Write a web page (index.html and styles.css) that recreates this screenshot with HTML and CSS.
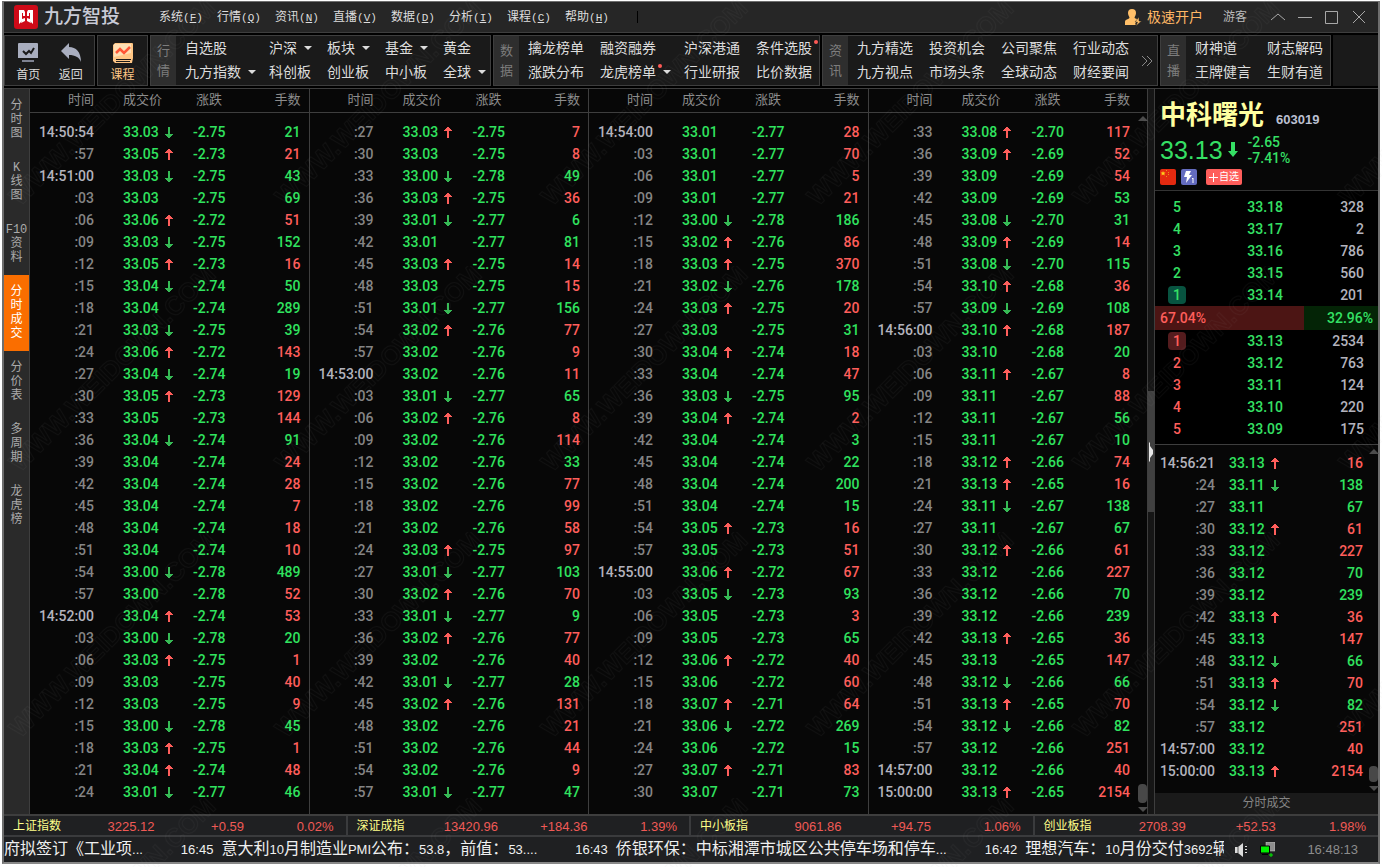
FILE: index.html
```html
<!DOCTYPE html>
<html lang="zh-CN">
<head>
<meta charset="utf-8">
<title>九方智投</title>
<link rel="stylesheet" href="styles.css">
</head>
<body>
<svg class="defs" aria-hidden="true">
  <symbol id="up" viewBox="0 0 8 11"><path d="M3 0h2v1h1v1h1v1h1v1H5v7H3V4H0V3h1V2h1V1h1z"/></symbol>
  <symbol id="down" viewBox="0 0 8 11"><path d="M3 11h2v-1h1V9h1V8h1V7H5V0H3v7H0v1h1v1h1v1h1z"/></symbol>
</svg>
<div class="window">
  <header class="titlebar">
    <svg class="logo" viewBox="0 0 24 24"><rect width="24" height="24" rx="3" fill="#cf0a18"/><path fill="#fff" d="M5 5h5l1 2v4H9V8H8v8l-3 3z"/><path fill="#fff" d="M19 5h-5l-1 2v4h2V8h1v8l3 3z"/><path fill="#fff" d="M8 14l3-1v3l-4 2zM16 14l-3-1v3l4 2z"/></svg>
    <h1 class="brand">九方智投</h1>
    <nav class="menus">
      <button>系统<span class="key">(<u>F</u>)</span></button>
      <button>行情<span class="key">(<u>Q</u>)</span></button>
      <button>资讯<span class="key">(<u>N</u>)</span></button>
      <button>直播<span class="key">(<u>V</u>)</span></button>
      <button>数据<span class="key">(<u>D</u>)</span></button>
      <button>分析<span class="key">(<u>I</u>)</span></button>
      <button>课程<span class="key">(<u>C</u>)</span></button>
      <button>帮助<span class="key">(<u>H</u>)</span></button>
    </nav>
    <span class="menu-end"></span>
    <a class="open-account" href="#"><svg viewBox="0 0 17 17" width="17" height="17" fill="#ffbf69"><path d="M7 0a4 4 0 0 1 4 4c0 2-1 3-1.500 4.500 0 1 3 1.500 3.500 2L10 15l1 1H0v-3c0-3 4-2.500 4.500-4.500C4 7 3 6 3 4a4 4 0 0 1 4-4z"/><path d="M14 8l-4 5h2.500L11 17l5.500-5H14z" stroke="#262626" stroke-width=".5"/></svg>极速开户</a>
    <a class="guest" href="#">游客</a>
    <div class="win-buttons">
      <button aria-label="收起"><svg viewBox="0 0 14 14"><path d="M0 10L7 4l7 6"/></svg></button>
      <button aria-label="最小化"><svg viewBox="0 0 14 14"><path d="M0 7.500h14"/></svg></button>
      <button aria-label="最大化"><svg viewBox="0 0 14 14"><path d="M.5 1.500h12v12H.5z"/></svg></button>
      <button aria-label="关闭"><svg viewBox="0 0 14 14"><path d="M1 1l12 12M13 1L1 13"/></svg></button>
    </div>
  </header>

  <nav class="toolbar">
    <div class="group icons">
      <button class="tool"><svg viewBox="0 0 20 20"><path fill="#a9aebf" d="M1 0h18a1 1 0 0 1 1 1v14H0V1a1 1 0 0 1 1-1z"/><path fill="#7e8291" d="M4 17h12v2H4z"/><path d="M5 8l3 3 3-3 2 2 3-5" fill="none" stroke="#1a1a1a" stroke-width="2"/></svg>首页</button>
      <button class="tool"><svg viewBox="0 0 20 20"><path fill="#a9aebf" d="M8 0v4c7 0 12 5 12 15-2-5-6-7-12-7v4L0 8z"/></svg>返回</button>
    </div>
    <div class="group icons single">
      <button class="tool course"><svg viewBox="0 0 20 20"><path fill="#ffc685" d="M2 0h17a1 1 0 0 1 1 1v14l-1 5H2l-2-2V2z"/><path fill="#ffdfb4" d="M1 1h17v9L1 14z"/><path d="M3 16.500h15M3 18.500h14" fill="none" stroke="#1a1a1a"/><path d="M3 10l4-4 4 4 6-6" fill="none" stroke="#ff5636" stroke-width="2.500"/></svg>课程</button>
    </div>
    <div class="group">
      <span class="label">行<br>情</span>
      <div class="links market">
        <a href="#">自选股</a><a class="drop" href="#">沪深</a><a class="drop" href="#">板块</a><a class="drop" href="#">基金</a><a href="#">黄金</a>
        <a class="drop" href="#">九方指数</a><a href="#">科创板</a><a href="#">创业板</a><a href="#">中小板</a><a class="drop" href="#">全球</a>
      </div>
    </div>
    <div class="group">
      <span class="label">数<br>据</span>
      <div class="links data">
        <a href="#">擒龙榜单</a><a href="#">融资融券</a><a href="#">沪深港通</a><a class="hot" href="#">条件选股</a>
        <a href="#">涨跌分布</a><a class="hot drop" href="#">龙虎榜单</a><a href="#">行业研报</a><a href="#">比价数据</a>
      </div>
    </div>
    <div class="group">
      <span class="label">资<br>讯</span>
      <div class="links info">
        <a href="#">九方精选</a><a href="#">投资机会</a><a href="#">公司聚焦</a><a href="#">行业动态</a>
        <a href="#">九方视点</a><a href="#">市场头条</a><a href="#">全球动态</a><a href="#">财经要闻</a>
      </div>
      <button class="more" aria-label="更多"><svg viewBox="0 0 12 12"><path d="M1 1l5 5-5 5M6 1l5 5-5 5"/></svg></button>
    </div>
    <div class="group">
      <span class="label">直<br>播</span>
      <div class="links live">
        <a href="#">财神道</a><a href="#">财志解码</a>
        <a href="#">王牌健言</a><a href="#">生财有道</a>
      </div>
    </div>
    <div class="group rest"></div>
  </nav>

  <main class="main">
    <nav class="tabs">
      <button>分<br>时<br>图</button>
      <button>K<br>线<br>图</button>
      <button>F10<br>资<br>料</button>
      <button class="active">分<br>时<br>成<br>交</button>
      <button>分<br>价<br>表</button>
      <button>多<br>周<br>期</button>
      <button>龙<br>虎<br>榜</button>
    </nav>
    <section class="ticks" id="ticks"></section>
    <div class="splitter"><span class="track-a"></span><span class="thumb"><svg viewBox="0 0 4 20"><path fill="#e8e8e8" d="M0 0l1 1v3l3 4v4l-3 4v3l-1 1z"/></svg></span><span class="track-b"></span></div>
    <aside class="quote">
      <div class="summary">
        <div class="name-row"><h2>中科曙光</h2><span class="code">603019</span></div>
        <div class="price-row"><span class="last">33.13</span><svg class="big-down" viewBox="0 0 10 15"><path d="M3 0h4v9h3l-5 6-5-6h3z"/></svg><span class="delta">-2.65<br>-7.41%</span></div>
        <div class="badges">
          <svg viewBox="0 0 16 16"><rect width="16" height="16" rx="2" fill="#e42a10"/><path fill="#ffd21c" d="M3 2l.7 1.600H5.500L4.200 4.700l.6 1.800L3 5.500 1.400 6.500l.5-1.800L.6 3.600h1.800z"/><path fill="#e8901c" d="M6 1h1v1H6zM8 3h1v1H8zM8 5h1v1H8zM6 7h1v1H6z"/></svg>
          <svg viewBox="0 0 16 16"><rect width="16" height="16" rx="2" fill="#646cc0"/><path fill="#fff" d="M5 2h5L8 6h3l-6 8 1-6H3z"/><path d="M11 10l1-1v5" fill="none" stroke="#fff"/></svg>
          <button class="add"><svg viewBox="0 0 9 9"><path d="M0 4.500h9M4.500 0v9"/></svg>自选</button>
        </div>
      </div>
      <table class="book sell"><tbody id="asks"></tbody></table>
      <div class="ratio"><span class="ratio-buy" style="width:67.04%">67.04%</span><span class="ratio-sell">32.96%</span></div>
      <table class="book buy"><tbody id="bids"></tbody></table>
      <div class="recent">
        <table class="recent-table"><tbody id="recent"></tbody></table>
        <div class="scroll"><span class="arrow-up"></span><span class="bar"></span><span class="arrow-down"></span></div>
      </div>
      <div class="foot">分时成交</div>
    </aside>
  </main>

  <section class="indices">
    <div class="index"><b>上证指数</b><span>3225.12</span><span>+0.59</span><span>0.02%</span></div>
    <div class="index"><b>深证成指</b><span>13420.96</span><span>+184.36</span><span>1.39%</span></div>
    <div class="index"><b>中小板指</b><span>9061.86</span><span>+94.75</span><span>1.06%</span></div>
    <div class="index"><b>创业板指</b><span>2708.39</span><span>+52.53</span><span>1.98%</span></div>
  </section>

  <footer class="status">
    <div class="news">
      <p>府拟签订《工业项<span>...</span></p>
      <p><time>16:45</time>意大利<span>10</span>月制造业<span>PMI</span>公布：<span>53.8</span>，前值：<span>53....</span></p>
      <p><time>16:43</time>侨银环保：中标湘潭市城区公共停车场和停车<span>...</span></p>
      <p><time>16:42</time>理想汽车：<span>10</span>月份交付<span>3692</span>辆</p>
    </div>
    <svg class="speaker" viewBox="0 0 14 14"><path fill="#ddd" d="M1 4h3l5-4v14l-5-4H1z"/><path d="M4 4v6" stroke="#555"/><path fill="#ddd" d="M11 3h2v1h-2zM11 6h2v1h-2zM11 9h2v1h-2z"/></svg>
    <svg class="net" viewBox="0 0 15 15"><path fill="#8d8d8d" stroke="#ccc" stroke-width=".5" d="M6 0h9v9H6z"/><path fill="#00f000" stroke="#000" stroke-width="1" d="M.5 4h9v7h-9z"/><path fill="#000" d="M2 12h6v1H2z"/><path d="M9 13h4M11 11v4" stroke="#00f000"/></svg>
    <time class="clock">16:48:13</time>
  </footer>
</div>
<svg class="watermark" aria-hidden="true">
  <defs><pattern id="wm" width="266" height="266" patternUnits="userSpaceOnUse"><text transform="translate(20 207) rotate(-45)">WWW.WEIDOWN.COM</text></pattern></defs>
  <rect width="100%" height="100%" fill="url(#wm)"/>
</svg>
<script src="script.js"></script>
</body>
</html>
```
FILE: styles.css
```css
* { box-sizing: border-box; }
body {
  margin: 0;
  background: #fff;
  color: #ddd;
  font: 14px/22px "Liberation Sans", "Noto Sans CJK SC", sans-serif;
}
button { background: none; border: 0; padding: 0; margin: 0; color: inherit; font: inherit; }
a { color: inherit; text-decoration: none; }
h1, h2, p { margin: 0; font-weight: 400; }
table { border-collapse: collapse; border-spacing: 0; width: 100%; table-layout: fixed; }
td, th { padding: 0; font-weight: inherit; white-space: nowrap; }
.defs { position: absolute; width: 0; height: 0; }

.window {
  display: flex;
  flex-direction: column;
  min-height: calc(100vh - 4px);
  margin: 1px 2px 3px;
  border: 1px solid #6e6e6e;
  border-width: 1px 2px 2px;
  border-bottom-color: #888;
  background: #000;
}

/* title bar */
.titlebar {
  display: flex;
  align-items: center;
  height: 31px;
  padding: 0 12px 0 10px;
  background: #262626;
  border-bottom: 1px solid #3e3e3e;
  font-size: 12px;
}
.logo { width: 24px; height: 24px; }
.brand { margin-left: 6px; width: 115px; font-size: 19px; line-height: 30px; font-weight: 500; color: #c9cbd6; }
.menus { display: flex; gap: 16px; }
.menus button { width: 42px; white-space: nowrap; text-align: left; }
.key { font: 11px "Liberation Mono", monospace; }
.menu-end { width: 1px; height: 12px; margin-left: 30px; background: #000; }
.open-account { display: flex; align-items: center; gap: 5px; margin-left: auto; color: #ffb765; font-size: 14px; }
.guest { margin-left: 20px; color: #bbb; }
.win-buttons { display: flex; gap: 13px; margin-left: 24px; }
.win-buttons button { width: 14px; height: 14px; }
.win-buttons svg { display: block; fill: none; stroke: #a8a8a8; }

/* toolbar */
.toolbar { display: flex; gap: 2px; margin-top: 2px; }
.group { display: flex; height: 51px; background: #1a1a1a; border: 1px solid #3e3e3e; }
.rest { flex: 1; border: 0; }
.icons { width: 91px; padding: 0 2px; }
.single { width: 51px; padding: 0; }
.tool { flex: 1; display: flex; flex-direction: column; align-items: center; padding-top: 7px; font-size: 12px; line-height: 18px; }
.tool svg { width: 20px; height: 20px; margin-bottom: 3px; }
.course { color: #ffc685; }
.label { flex: none; width: 25px; padding-top: 5px; text-align: center; background: #2e2e2e; color: #7d7d7d; font-size: 13px; line-height: 20px; }
.links { display: grid; align-content: start; line-height: 24px; padding: 0 5px 0 9px; }
.links a { white-space: nowrap; justify-self: start; position: relative; }
.market { grid-template-columns: 84px 58px 58px 58px 42px; }
.data { grid-template-columns: 72px 84px 72px 58px; }
.info { grid-template-columns: 72px 72px 72px 64px; padding-right: 0; }
.live { grid-template-columns: 72px 58px; }
.drop::after { content: ""; display: inline-block; margin: 0 0 3px 7px; border: 4px solid transparent; border-top-color: #ddd; border-bottom: 0; }
.hot::before { content: ""; position: absolute; left: 58px; top: 4px; width: 4px; height: 4px; border-radius: 2px; background: #ff5a55; }
.more { width: 20px; display: flex; align-items: center; justify-content: center; }
.more svg { width: 12px; height: 12px; fill: none; stroke: #888; }

/* main */
.main { flex: 1; display: flex; margin-top: 2px; border-top: 1px solid #3e3e3e; border-bottom: 2px solid #3e3e3e; background: #070707; }
.tabs { flex: none; width: 26px; background: #2a2a2a; border-right: 1px solid #3e3e3e; }
.tabs button { display: block; width: 100%; padding: 10px 0; font-family: "Liberation Mono", "Noto Sans CJK SC", monospace; font-size: 12px; line-height: 14px; color: #aaa; }
.tabs .active { background: #fa6e00; color: #fff; }

.ticks { flex: 1; display: grid; grid-template-columns: repeat(4, 1fr); }
.panel { display: flex; border-right: 1px solid #3e3e3e; }
.panel-table { flex: 1; align-self: flex-start; }
.tick td { height: 22px; font: 500 14px/22px Roboto, sans-serif; }
.panel-table th { height: 23px; border-bottom: 1px solid #3e3e3e; color: #8c8c8c; font-size: 13px; line-height: 20px; text-align: left; }
.panel-table tbody::before { content: ""; display: block; height: 8px; }
.c-time { width: 64px; }
.c-price { width: 99px; }
.c-change { width: 50px; }
.panel-table .time { text-align: right; }
.panel-table .price { padding-left: 29px; }
.panel-table th.change { padding-left: 3px; }
.panel-table .vol { text-align: right; padding-right: 8px; }
.tick .time { color: #858585; }
.tick .full { color: #b3b3bd; }
.tick .price, .tick .change, .g { color: #30e35f; }
.r { color: #ff5e5b; }
.mark { width: 8px; height: 11px; margin-left: 6px; vertical-align: -1px; }
.mark.up { fill: #ff5e5b; }
.mark.down { fill: #36ba55; }

.scroll { flex: none; width: 9px; display: flex; flex-direction: column; align-items: center; }
.arrow-up { border: 5px solid transparent; border-top: 0; border-bottom-color: #4c4c4c; margin-top: 4px; }
.bar { width: 9px; height: 16px; margin-top: auto; border-radius: 4px; background: #484848; }
.arrow-down { border: 5px solid transparent; border-bottom: 0; border-top-color: #4c4c4c; margin: 4px 0 2px; }
.panel .scroll { padding-top: 23px; background: linear-gradient(#3e3e3e, #3e3e3e) 0 23px / 100% 1px no-repeat; }
.panel .bar { height: 19px; }

.splitter { flex: none; width: 6px; display: flex; flex-direction: column; background: #161616; }
.track-a, .track-b { flex: 1; }
.thumb { flex: 0 0 121px; display: flex; align-items: center; background: #404040; }
.thumb svg { width: 4px; height: 20px; margin-left: 1px; }

/* quote panel */
.quote { flex: none; width: 224px; display: flex; flex-direction: column; border-left: 1px solid #3e3e3e; background: #000; }
.summary { height: 102px; padding: 10px 5px 0; background: #070707; border-bottom: 1px solid #333; }
.name-row { display: flex; align-items: baseline; gap: 12px; height: 34px; }
.name-row h2 { font-size: 26px; line-height: 32px; font-weight: 700; color: #ffffa0; }
.code { font-size: 13px; font-weight: 700; color: #bcc0d2; }
.price-row { display: flex; align-items: center; height: 33px; color: #35df64; }
.last { font-size: 25px; line-height: 26px; }
.big-down { width: 10px; height: 15px; margin: 0 10px 0 5px; fill: #35df64; }
.delta { font: 500 14px/16px Roboto, sans-serif; }
.badges { display: flex; gap: 5px; padding-top: 3px; }
.badges > svg { width: 16px; height: 16px; }
.add { display: flex; align-items: center; gap: 1px; height: 16px; margin-left: 4px; padding: 0 3px; border-radius: 2px; background: #ff5e5b; color: #fff; font-size: 10px; line-height: 16px; }
.add svg { width: 9px; height: 9px; stroke: #fff; stroke-width: 1; fill: none; }
.book td { height: 22px; font: 500 14px/22px Roboto, sans-serif; text-align: right; color: #35e065; }
.book.sell { margin-top: 5px; }
.book .lv { width: 44px; text-align: center; }
.book .px { width: 84px; }
.book .qty { color: #b3b3bd; padding-right: 14px; }
.book.buy .lv { color: #ff5e5b; }
.book .lv span { display: inline-block; width: 18px; line-height: 18px; border-radius: 4px; }
.book .first { background: #085340; }
.book.buy .first { background: #541c1e; }
.ratio { display: flex; height: 24px; font: 500 14px/24px Roboto, sans-serif; }
.ratio-buy { padding-left: 5px; background: #4c1514; color: #ff5e5b; }
.ratio-sell { flex: 1; padding-right: 5px; text-align: right; background: #042406; color: #35e065; }
.recent { flex: 1; display: flex; margin-top: 4px; border-top: 1px solid #3e3e3e; background: #070707; }
.recent-table { flex: 1; align-self: flex-start; margin-top: 7px; }
.recent-table .time { width: 60px; text-align: right; }
.recent-table .price { width: 94px; padding-left: 14px; }
.recent-table .vol { text-align: right; padding-right: 6px; }
.foot { height: 21px; background: #1a1a1a; color: #858585; font-size: 12px; line-height: 21px; text-align: center; }

/* bottom bars */
.indices { display: grid; grid-template-columns: repeat(4, 1fr); background: #1f2022; border-bottom: 2px solid #3a3b3d; }
.index { display: grid; grid-template-columns: 52px 1fr 1fr 1fr; height: 19px; padding: 0 12px 0 9px; border-right: 2px solid #3a3b3d; font-size: 13px; line-height: 22px; text-align: right; color: #f05a56; }
.index:last-child { border-right: 0; }
.index b { font-weight: 400; font-size: 12px; line-height: 20px; text-align: left; white-space: nowrap; color: #ffff8a; }
.status { display: flex; align-items: center; height: 25px; padding-right: 20px; background: #1f2022; color: #f0f0f0; }
.news { flex: 1; min-width: 0; display: flex; gap: 38px; overflow: hidden; font-size: 16px; line-height: 24px; white-space: nowrap; }
.news p { flex: none; }
.news time, .news span { font-size: 13px; }
.news time { margin-right: 8px; }
.speaker { flex: none; width: 14px; height: 14px; margin-left: 10px; }
.net { flex: none; width: 15px; height: 15px; margin: 0 32px 0 12px; }
.clock { font-size: 13px; color: #8c8c8c; }

.watermark { position: absolute; left: 0; top: 0; width: 100%; height: 100%; pointer-events: none; }
.watermark text { font: 700 26px "Liberation Sans", sans-serif; fill: none; stroke: #999; stroke-opacity: .06; }
```
FILE: script.js
```javascript
// Each tick: time, price in cents over 33.00 (u/d = direction), volume (r/g = colour)
const PREV_CLOSE = 3578;
const panels = [
  `14:50:54 03d 21g|57 05u 21r|14:51:00 03d 43g|03 03 69g|06 06u 51r|09 03d 152g|12 05u 16r|15 04d 50g|18 04 289g|21 03d 39g|24 06u 143r|27 04d 19g|30 05u 129r|33 05 144r|36 04d 91g|39 04 24r|42 04 28r|45 04 7r|48 04 18r|51 04 10r|54 00d 489g|57 00 52r|14:52:00 04u 53r|03 00d 20g|06 03u 1r|09 03 40r|12 03 9r|15 00d 45g|18 03u 1r|21 04u 48r|24 01d 46g`,
  `27 03u 7r|30 03 8r|33 00d 49g|36 03u 36r|39 01d 6g|42 01 81g|45 03u 14r|48 03 15r|51 01d 156g|54 02u 77r|57 02 9r|14:53:00 02 11r|03 01d 65g|06 02u 8r|09 02 114r|12 02 33g|15 02 77r|18 02 99r|21 02 58r|24 03u 97r|27 01d 103g|30 02u 70r|33 01d 9g|36 02u 77r|39 02 40r|42 01d 28g|45 02u 131r|48 02 21r|51 02 44r|54 02 9r|57 01d 47g`,
  `14:54:00 01 28r|03 01 70r|06 01 5r|09 01 21r|12 00d 186g|15 02u 86r|18 03u 370r|21 02d 178g|24 03u 20r|27 03 31g|30 04u 18r|33 04 47r|36 03d 95g|39 04u 2r|42 04 3g|45 04 22g|48 04 200g|51 04 15g|54 05u 16r|57 05 51r|14:55:00 06u 67r|03 05d 93g|06 05 3r|09 05 65g|12 06u 40r|15 06 60r|18 07u 64r|21 06d 269g|24 06 15g|27 07u 83r|30 07 73g`,
  `33 08u 117r|36 09u 52r|39 09 54r|42 09 53g|45 08d 31g|48 09u 14r|51 08d 115g|54 10u 36r|57 09d 108g|14:56:00 10u 187r|03 10 20g|06 11u 8r|09 11 88r|12 11 56g|15 11 10g|18 12u 74r|21 13u 16r|24 11d 138g|27 11 67g|30 12u 61r|33 12 227r|36 12 70g|39 12 239g|42 13u 36r|45 13 147r|48 12d 66g|51 13u 70r|54 12d 82g|57 12 251r|14:57:00 12 40r|15:00:00 13u 2154r`
];
const recent = `14:56:21 13u 16r|24 11d 138g|27 11 67g|30 12u 61r|33 12 227r|36 12 70g|39 12 239g|42 13u 36r|45 13 147r|48 12d 66g|51 13u 70r|54 12d 82g|57 12 251r|14:57:00 12 40r|15:00:00 13u 2154r`;

function rows(data, withChange) {
  return data.split('|').map(line => {
    const [time, p, v] = line.split(' ');
    const cents = p.slice(0, 2);
    const dir = { u: 'up', d: 'down' }[p[2]];
    const mark = dir ? `<svg class="mark ${dir}"><use href="#${dir}"/></svg>` : '';
    const change = ((3300 + Number(cents) - PREV_CLOSE) / 100).toFixed(2);
    const full = time.length > 2;
    return `<tr class="tick"><td class="time${full ? ' full' : ''}">${full ? time : ':' + time}</td>` +
      `<td class="price">33.${cents}${mark}</td>` +
      (withChange ? `<td class="change">${change}</td>` : '') +
      `<td class="vol ${v.slice(-1)}">${v.slice(0, -1)}</td></tr>`;
  }).join('');
}

const scroll = '<div class="scroll"><span class="arrow-up"></span><span class="bar"></span><span class="arrow-down"></span></div>';
document.getElementById('ticks').innerHTML = panels.map((data, i) =>
  `<div class="panel"><table class="panel-table">
    <colgroup><col class="c-time"><col class="c-price"><col class="c-change"><col></colgroup>
    <thead><tr><th class="time">时间</th><th class="price">成交价</th><th class="change">涨跌</th><th class="vol">手数</th></tr></thead>
    <tbody>${rows(data, true)}</tbody></table>${i === 3 ? scroll : ''}</div>`).join('');
document.getElementById('recent').innerHTML = rows(recent, false);

const book = (list, firstLevel) => list.map(([level, price, qty]) =>
  `<tr><td class="lv"><span${level === firstLevel ? ' class="first"' : ''}>${level}</span></td><td class="px">${price}</td><td class="qty">${qty}</td></tr>`).join('');
document.getElementById('asks').innerHTML = book([[5, '33.18', 328], [4, '33.17', 2], [3, '33.16', 786], [2, '33.15', 560], [1, '33.14', 201]], 1);
document.getElementById('bids').innerHTML = book([[1, '33.13', 2534], [2, '33.12', 763], [3, '33.11', 124], [4, '33.10', 220], [5, '33.09', 175]], 1);
```
